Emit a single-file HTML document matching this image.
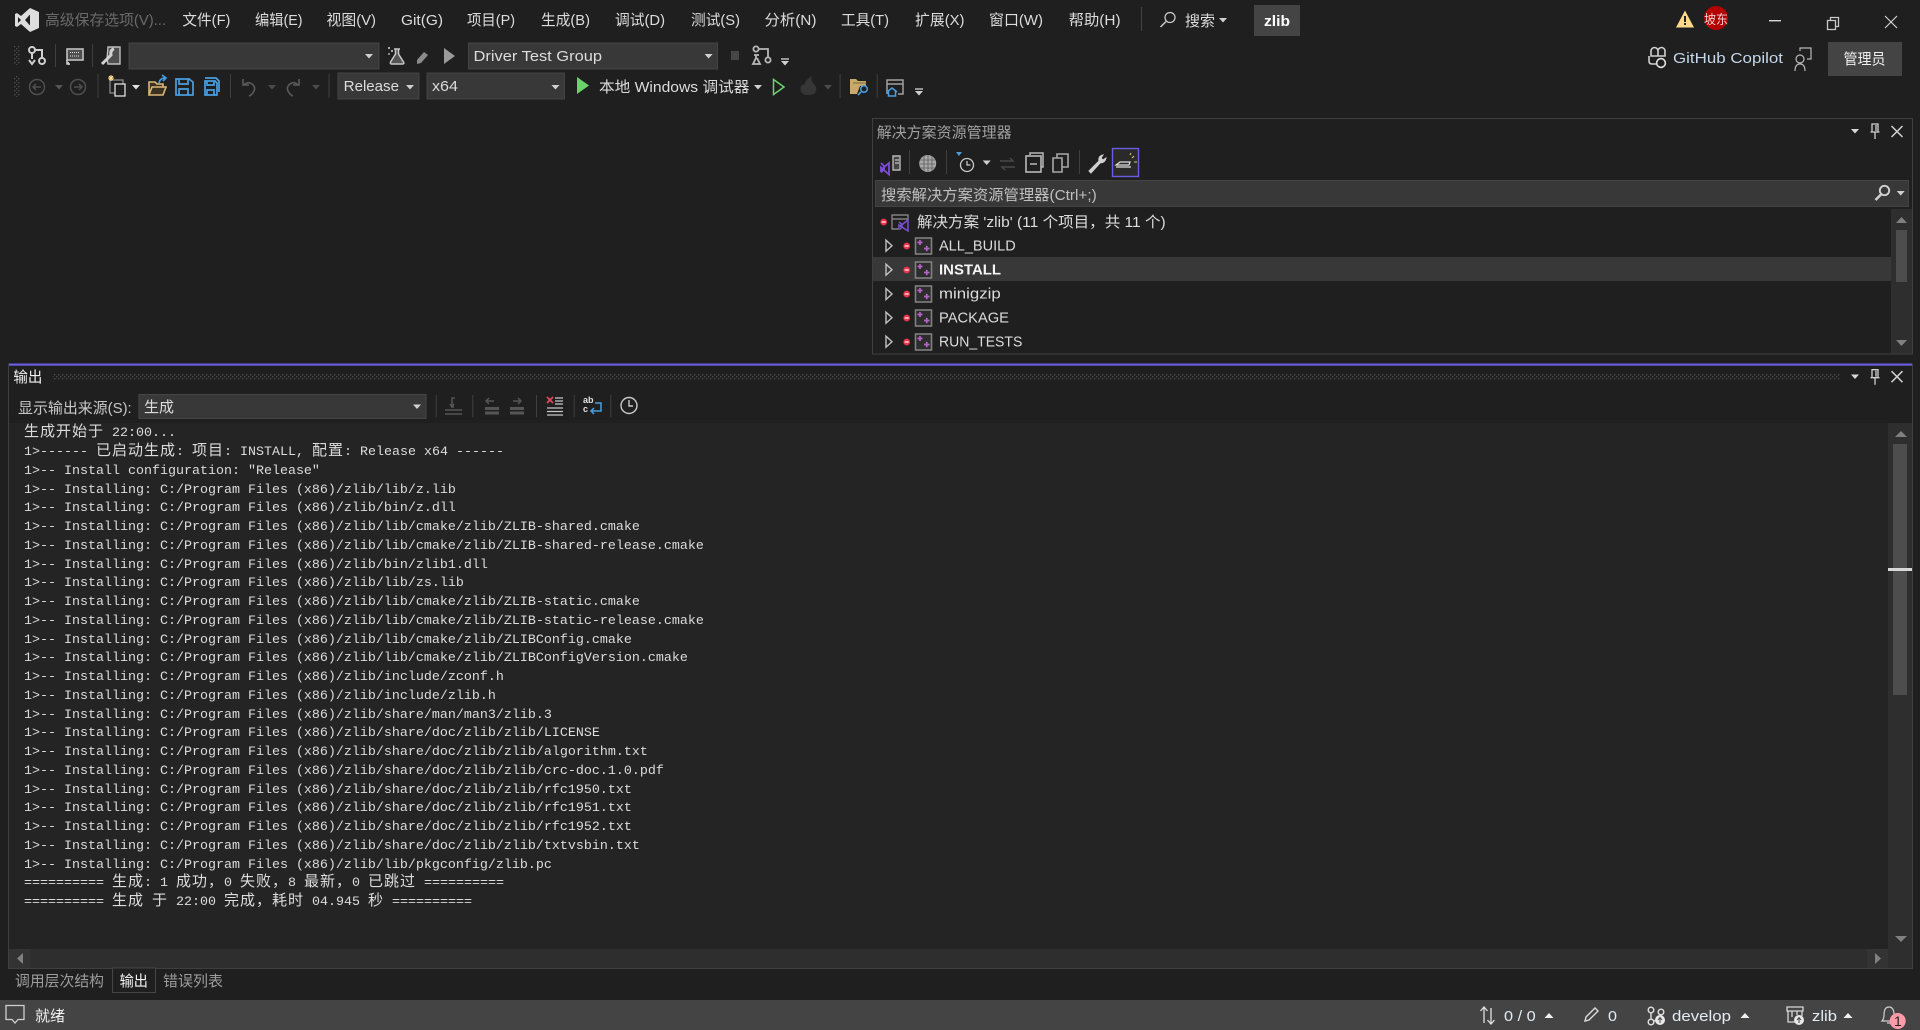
<!DOCTYPE html>
<html lang="zh"><head><meta charset="utf-8"><title>zlib</title>
<style>
html,body{margin:0;padding:0;width:1920px;height:1030px;overflow:hidden;background:#1f1f1f}
svg{position:absolute;left:0;top:0}
svg text{font-family:"Liberation Sans","Noto Sans CJK SC",sans-serif;font-size:15px;fill:#dcdcdc}
use{fill:#d0d0d0}
#o{position:absolute;left:24px;top:422.4px;width:1850px;color:#dcdcdc;font-family:"Liberation Mono",monospace;font-size:13.33px}
#o div{height:18.75px;line-height:18.75px;white-space:pre}
#o div::before{content:"\200b";font-family:"Noto Sans CJK SC",sans-serif;font-size:15px}
#o b{font-weight:400;font-family:"Noto Sans CJK SC",sans-serif;font-size:15px;letter-spacing:1px}
</style></head><body>
<svg width="1920" height="1030" viewBox="0 0 1920 1030" xmlns="http://www.w3.org/2000/svg">
<defs>
<path id="cd" d="M-4,-2h8l-4,4.5z"/>
<path id="cu" d="M-4.5,2.5h9l-4.5,-5z"/>
<pattern id="gr" width="4" height="4" patternUnits="userSpaceOnUse"><rect width="1.4" height="1.4" fill="#4a4a4a"/><rect x="2" y="2" width="1.4" height="1.4" fill="#4a4a4a"/></pattern>
<g id="proj"><rect x="-7.5" y="-8" width="16" height="16" fill="#2c2c2c" stroke="#808080" stroke-width="1.6"/><path d="M-5.5,-3.5h5M-3,-6v5M1,2.5h5.500M3.750,-.2v5.400" stroke="#b95fd0" stroke-width="1.7" fill="none"/></g>
<g id="tri"><path d="M-3,-5.5L3,0L-3,5.5Z" fill="none" stroke="#c0c0c0" stroke-width="1.4"/></g>
<g id="dot"><circle r="3.4" fill="#e8344c"/><rect x="-2" y="-.6" width="4" height="1.2" fill="#fff"/></g>
<g id="pin"><path d="M-3,-7h6v8h-6zM-4.5,1h9M0,1v7M1,-6v6" stroke="#d0d0d0" stroke-width="1.3" fill="none"/></g>
<path id="x" d="M-5.5,-5.5L5.5,5.5M5.5,-5.5L-5.5,5.5" stroke="#d0d0d0" stroke-width="1.5" fill="none"/>
</defs>

<!-- combos top toolbar -->
<rect x="129" y="43" width="250" height="26" fill="#383838" stroke="#434343"/>
<rect x="468.5" y="43" width="249" height="26" fill="#383838" stroke="#434343"/>
<rect x="338" y="73" width="81" height="26" fill="#383838" stroke="#434343"/>
<rect x="427" y="73" width="137.5" height="26" fill="#383838" stroke="#434343"/>

<!-- logo -->
<path fill-rule="evenodd" fill="#dedede" d="M30,8L39,12V28L30,32L21,24L17,27L15,26V14L17,13L21,16ZM18,17L21,20L18,23ZM30,14.5L25,20L30,25.5Z"/>

<!-- menu -->
<text x="45" y="25" textLength="121" lengthAdjust="spacingAndGlyphs" style="fill:#6a6a6a">高级保存选项(V)...</text>
<text x="182.4" y="25" textLength="48" lengthAdjust="spacingAndGlyphs">文件(F)</text>
<text x="255" y="25" textLength="47.5" lengthAdjust="spacingAndGlyphs">编辑(E)</text>
<text x="326.5" y="25" textLength="49.5" lengthAdjust="spacingAndGlyphs">视图(V)</text>
<text x="401" y="25" textLength="42" lengthAdjust="spacingAndGlyphs">Git(G)</text>
<text x="467" y="25" textLength="48" lengthAdjust="spacingAndGlyphs">项目(P)</text>
<text x="541" y="25" textLength="49" lengthAdjust="spacingAndGlyphs">生成(B)</text>
<text x="615" y="25" textLength="50" lengthAdjust="spacingAndGlyphs">调试(D)</text>
<text x="691" y="25" textLength="49" lengthAdjust="spacingAndGlyphs">测试(S)</text>
<text x="764.5" y="25" textLength="52" lengthAdjust="spacingAndGlyphs">分析(N)</text>
<text x="841" y="25" textLength="48" lengthAdjust="spacingAndGlyphs">工具(T)</text>
<text x="915" y="25" textLength="49.5" lengthAdjust="spacingAndGlyphs">扩展(X)</text>
<text x="989" y="25" textLength="54" lengthAdjust="spacingAndGlyphs">窗口(W)</text>
<text x="1068.6" y="25" textLength="52" lengthAdjust="spacingAndGlyphs">帮助(H)</text>
<rect x="1141" y="7" width="1" height="24" fill="#444"/>
<circle cx="1170" cy="17.5" r="5" fill="none" stroke="#c8c8c8" stroke-width="1.3"/><path d="M1166,21.5L1160.5,27" stroke="#c8c8c8" stroke-width="1.5"/>
<text x="1185" y="26" textLength="30" lengthAdjust="spacingAndGlyphs">搜索</text>
<use href="#cd" x="1223" y="20"/>
<rect x="1254" y="5" width="46" height="31" fill="#444"/>
<text x="1264" y="26" textLength="26" lengthAdjust="spacingAndGlyphs" style="font-weight:700;fill:#fff">zlib</text>

<!-- window right -->
<path d="M1685,10.500L1694,27.500H1676Z" fill="#ffd98a"/><rect x="1684" y="16" width="2" height="6" fill="#222"/><rect x="1684" y="23" width="2" height="2" fill="#222"/>
<circle cx="1716" cy="18" r="12" fill="#b30000"/>
<text x="1704" y="24" textLength="24" lengthAdjust="spacingAndGlyphs" style="font-size:13px;fill:#f0d0d0">坡东</text>
<rect x="1769" y="20" width="12" height="1.4" fill="#d8d8d8"/>
<path d="M1827.5,20.5h8v9h-8zM1830.5,20.5v-3h8v9h-3" fill="none" stroke="#c8c8c8" stroke-width="1.3"/>
<path d="M1885,16L1897,28M1897,16L1885,28" stroke="#d0d0d0" stroke-width="1.2"/>
<g fill="none" stroke="#d0d0d0" stroke-width="1.6"><path d="M1651,51a3.5,3.5 0 0 1 7,0v5h-7zM1658,51a3.5,3.5 0 0 1 7,0v5h-7zM1649,56v5q0,3 3,3h4"/></g><circle cx="1661" cy="63" r="4.4" fill="#1f1f1f" stroke="#e0e0e0" stroke-width="1.6"/>
<text x="1673" y="63" textLength="110" lengthAdjust="spacingAndGlyphs" style="fill:#c4d6ea">GitHub Copilot</text>
<g fill="none" stroke="#b8b8b8" stroke-width="1.2"><circle cx="1800" cy="59" r="4"/><path d="M1795,71q0,-7 5,-7t5,7M1800,51v-3h11v11h-4"/></g>
<rect x="1828" y="42" width="74" height="34" fill="#444"/>
<text x="1843.5" y="64" textLength="42" lengthAdjust="spacingAndGlyphs" style="fill:#f0f0f0">管理员</text>

<!-- toolbar 1 -->
<rect x="14" y="46" width="6" height="19" fill="url(#gr)"/>
<rect x="14" y="76" width="6" height="21" fill="url(#gr)"/>
<g fill="none" stroke="#cfcfcf" stroke-width="2"><circle cx="32" cy="50" r="3"/><circle cx="42" cy="61" r="3"/><path d="M35,50h7v8M32,53v6M29,60l3,4l3,-4"/></g>
<rect x="55" y="44" width="1" height="23" fill="#3f3f3f"/>
<rect x="92" y="44" width="1" height="23" fill="#3f3f3f"/>
<rect x="67" y="49" width="16" height="11" fill="#4e4e4e" stroke="#c0c0c0" stroke-width="1.6"/><path d="M70,52.5h10M70,56h10" stroke="#e0e0e0" stroke-dasharray="1 1"/><path d="M67,60v4h3M68,62l1,3" stroke="#c8c8c8" stroke-width="1.6" fill="none"/>
<path d="M108,47h12v17h-12l-1,-5z" fill="#4e4e4e" stroke="#bfbfbf" stroke-width="1.4"/><path d="M102,64l9,-9q-1,-5 3,-6" stroke="#d0d0d0" stroke-width="3" fill="none"/>
<use href="#cd" x="369" y="56"/>
<path d="M394,49h6M395.500,49v5l-5,8q-.5,2 1,2h11q2,0 1,-2l-5,-8v-5" fill="#555" stroke="#c8c8c8" stroke-width="1.5"/><rect x="388" y="47" width="2" height="2" fill="#aaa"/><rect x="391" y="50" width="2" height="2" fill="#aaa"/><rect x="388" y="53" width="2" height="2" fill="#888"/>
<path d="M417,60l7,-8l4,3l-7,8l-4,1z" fill="#8a8a8a"/>
<path d="M444,48L455,56L444,64Z" fill="#9a9a9a"/>
<text x="473.5" y="61" textLength="128.5" lengthAdjust="spacingAndGlyphs">Driver Test Group</text>
<use href="#cd" x="708.6" y="56"/>
<rect x="731" y="51" width="8" height="9" fill="#474747"/>
<g fill="none" stroke="#b8b8b8" stroke-width="1.8"><circle cx="756" cy="49" r="2.6"/><circle cx="768" cy="60" r="2.6"/><path d="M759,49h9v8"/><path d="M754,55h5M756,55v3l-3,6h7l-3,-6" /></g>
<path d="M781,59h8" stroke="#c8c8c8" stroke-width="1.4"/><use href="#cd" x="785" y="63"/>

<!-- toolbar 2 -->
<g fill="none" stroke="#4e4e4e" stroke-width="1.5"><circle cx="37" cy="87" r="7.5"/><path d="M41,87h-8M36,84l-3,3l3,3"/><circle cx="78" cy="87" r="7.5"/><path d="M74,87h8M79,84l3,3l-3,3"/></g>
<use href="#cd" x="59" y="87" style="fill:#555"/>
<rect x="97.5" y="74" width="1" height="24" fill="#3f3f3f"/>
<g transform="translate(-2,0)"><rect x="112" y="80" width="13" height="13" fill="none" stroke="#8a8a8a" stroke-width="1.3"/><rect x="117" y="84" width="10" height="12" fill="#1f1f1f" stroke="#e0e0e0" stroke-width="1.3"/><path d="M110,78h6M113,75v6M111,76l4,4M115,76l-4,4" stroke="#ffdf8c" stroke-width="1.1"/></g>
<use href="#cd" x="136" y="87" style="fill:#e0e0e0"/>
<path d="M150,95V82h6l2,2h6v3M150,95l3,-8h14l-3,8z" fill="#3a3220" stroke="#dcb67a" stroke-width="1.6" transform="translate(-1,0)"/><path d="M160,83q1,-5 6,-5M163,75l4,3l-3,3" fill="none" stroke="#4a9fe0" stroke-width="1.6" transform="translate(-1,0)"/>
<g fill="none" stroke="#4a9fe0" stroke-width="1.7" transform="translate(-1,0)"><path d="M177,79h13l4,3v13h-17zM180,79v5h9v-5M180,95v-6h9v6"/><path d="M206,81h10l2,2v12h-12zM208,81v4h7v-4M208,95v-5h7v5M206,78h11l3,3v11"/></g>
<rect x="230" y="74" width="1" height="24" fill="#3f3f3f"/>
<path d="M243,79v6h6M244,85q4,-4 8,-1q4,3 2,7q-2,4 -5,5" fill="none" stroke="#5a5a5a" stroke-width="1.6"/>
<use href="#cd" x="272" y="87" style="fill:#4c4c4c"/>
<path d="M299,79v6h-6M298,85q-4,-4 -8,-1q-4,3 -2,7q2,4 5,5" fill="none" stroke="#5a5a5a" stroke-width="1.6"/>
<use href="#cd" x="316" y="87" style="fill:#4c4c4c"/>
<rect x="328.5" y="74" width="1" height="24" fill="#3f3f3f"/>
<text x="343.7" y="91" textLength="55.3" lengthAdjust="spacingAndGlyphs">Release</text>
<use href="#cd" x="410" y="87"/>
<text x="432" y="91" textLength="26" lengthAdjust="spacingAndGlyphs">x64</text>
<use href="#cd" x="555.5" y="87"/>
<path d="M577,77L589,85.5L577,94Z" fill="#6cd36c"/>
<text x="599" y="92" textLength="150.4" lengthAdjust="spacingAndGlyphs">本地 Windows 调试器</text>
<use href="#cd" x="758" y="87"/>
<path d="M773.5,79.5L784,87L773.5,94.5Z" fill="none" stroke="#6cd36c" stroke-width="1.5"/>
<path d="M804,95q-6,-3 -4,-9q2,-2 3,-1q1,-5 8,-9q-2,5 2,8q4,4 1,9q-2,2 -10,2z" fill="#363636" transform="translate(1,0)"/>
<use href="#cd" x="828" y="87" style="fill:#4c4c4c"/>
<rect x="839.6" y="74" width="1" height="24" fill="#3f3f3f"/>
<path d="M850,94V79h6l2,2h8v5h-6l-3,8z" fill="#c9a86a"/><path d="M853,83h13" stroke="#7d6a44"/>
<circle cx="864" cy="89" r="3.3" fill="#1f1f1f" stroke="#4a9fe0" stroke-width="1.5"/><path d="M861,92l-3,3" stroke="#4a9fe0" stroke-width="1.6"/>
<rect x="876.7" y="74" width="1" height="24" fill="#3f3f3f"/>
<path d="M887,94V80h16v14h-5M887,84h16" fill="none" stroke="#a0a0a0" stroke-width="1.5"/>
<path d="M887,92l5,-4l5,4M888.5,91v5h7v-5" fill="none" stroke="#4a9fe0" stroke-width="1.5"/>
<path d="M915,89h8" stroke="#c8c8c8" stroke-width="1.4"/><use href="#cd" x="919" y="93"/>

<!-- solution explorer -->
<rect x="872.5" y="118.5" width="1040" height="235.5" fill="#1f1f1f" stroke="#3f3f3f"/>
<text x="876.7" y="137.500" textLength="135" lengthAdjust="spacingAndGlyphs" style="fill:#a0a0a0">解决方案资源管理器</text>
<use href="#cd" x="1855" y="131" style="fill:#d8d8d8"/><use href="#pin" x="1875" y="131"/><use href="#x" x="1897" y="131.5"/>
<path d="M893,156h7v14h-7z" fill="#444" stroke="#b8b8b8" stroke-width="1.4"/><path d="M895,160h4M895,163h4" stroke="#e0e0e0"/>
<path d="M881,163l3,3v3l-3,3.500M881,170l8,-7v11.500l-8,-7z" fill="#1f1f1f" stroke="#7a4fd6" stroke-width="1.800"/>
<rect x="909" y="150" width="1" height="24" fill="#3f3f3f"/>
<circle cx="927.7" cy="163.5" r="8.500" fill="#a8a8a8"/><path d="M924,156v15M928,155v17M932,156v15M920,160h15M920,164h15M920,168h15" stroke="#5e5e5e" stroke-width=".8"/>
<rect x="946" y="150" width="1" height="24" fill="#3f3f3f"/>
<path d="M956,152h6l-3,4z" fill="#4a9fe0"/>
<circle cx="967" cy="165" r="6.5" fill="none" stroke="#c8c8c8" stroke-width="1.3"/><path d="M967,161v4h3.5" stroke="#c8c8c8" fill="none" stroke-width="1.3"/>
<use href="#cd" x="986.7" y="162.500"/>
<path d="M1000,161h13l-3,-3M1015,167h-13l3,3" fill="none" stroke="#484848" stroke-width="1.5"/>
<rect x="1026" y="156" width="15" height="16" fill="none" stroke="#b8b8b8" stroke-width="1.6"/><path d="M1030,155v-2h13v14h-2M1030,164h7" fill="none" stroke="#b8b8b8" stroke-width="1.5"/>
<path d="M1053,158h9v14h-9zM1057,158v-4h11v13h-6" fill="none" stroke="#a8a8a8" stroke-width="1.6"/>
<rect x="1079" y="150" width="1" height="24" fill="#3f3f3f"/>
<path d="M1089,171l10,-10q-1,-5 4,-6l-2,3l2,2l3,-2q-1,5 -6,5l-9,10z" fill="#d0d0d0" stroke="#d0d0d0" stroke-width="1"/>
<rect x="1112.5" y="148.5" width="26" height="28" fill="#2a2a2a" stroke="#6a5de0" stroke-width="1.4"/>
<path d="M1116,165h13l1,-3h-10zM1116,167h15" fill="none" stroke="#e0e0e0" stroke-width="1.2"/><path d="M1132,158l2,-2M1134,162h3M1130,155l1,-2" stroke="#e8c560" stroke-width="1"/>
<rect x="875.5" y="180.5" width="1033" height="26" fill="#383838" stroke="#434343"/>
<text x="881" y="200" textLength="215.700" lengthAdjust="spacingAndGlyphs" style="fill:#c0c0c0">搜索解决方案资源管理器(Ctrl+;)</text>
<circle cx="1884.500" cy="190.500" r="4.700" fill="none" stroke="#d0d0d0" stroke-width="1.900"/><path d="M1881,194.500l-5.500,5.500" stroke="#d0d0d0" stroke-width="2.600"/>
<use href="#cd" x="1900.7" y="193"/>
<rect x="873" y="257" width="1018" height="24" fill="#383838"/>
<rect x="1891" y="209" width="21" height="144.5" fill="#2e2e2e"/>
<rect x="1896" y="230" width="11" height="52" fill="#4d4d4d"/>
<path d="M1896,223h11l-5.500,-6z" fill="#808080"/><path d="M1896,340h11l-5.500,6z" fill="#808080"/>
<use href="#dot" x="883.7" y="222"/>
<path d="M892,219v-4h16v5M892,219h16M892,219v10h7" fill="none" stroke="#808080" stroke-width="1.4"/>
<path d="M899,222l3,2.500v3l-3,2M899,227l9,-7v11l-9,-6z" fill="#1f1f1f" stroke="#7a4fd6" stroke-width="1.500"/>
<text x="917" y="227" textLength="248.700" lengthAdjust="spacingAndGlyphs">解决方案 'zlib' (11 个项目，共 11 个)</text>
<use href="#tri" x="889" y="245.700"/><use href="#dot" x="906.700" y="246"/><use href="#proj" x="923" y="246"/>
<text x="939" y="250.500" textLength="76.700" lengthAdjust="spacingAndGlyphs">ALL_BUILD</text>
<use href="#tri" x="889" y="269.700"/><use href="#dot" x="906.700" y="270"/><use href="#proj" x="923" y="270"/>
<text x="939" y="274.500" textLength="62" lengthAdjust="spacingAndGlyphs" style="font-weight:700;fill:#f4f4f4">INSTALL</text>
<use href="#tri" x="889" y="294"/><use href="#dot" x="906.700" y="294"/><use href="#proj" x="923" y="294"/>
<text x="939" y="298.500" textLength="61.700" lengthAdjust="spacingAndGlyphs">minigzip</text>
<use href="#tri" x="889" y="317.700"/><use href="#dot" x="906.700" y="318"/><use href="#proj" x="923" y="318"/>
<text x="939" y="322.500" textLength="70" lengthAdjust="spacingAndGlyphs">PACKAGE</text>
<use href="#tri" x="889" y="341.700"/><use href="#dot" x="906.700" y="342"/><use href="#proj" x="923" y="342"/>
<text x="939" y="346.500" textLength="83.300" lengthAdjust="spacingAndGlyphs">RUN_TESTS</text>

<!-- output panel -->
<rect x="8.500" y="364" width="1904" height="604.500" fill="#1f1f1f" stroke="#3f3f3f"/>
<rect x="9" y="363.500" width="1904" height="2.200" fill="#6a5de0"/>
<text x="13.400" y="382" textLength="29" lengthAdjust="spacingAndGlyphs" style="fill:#f0f0f0">输出</text>
<rect x="52.700" y="374" width="1787" height="6" fill="url(#gr)"/>
<use href="#cd" x="1855" y="376.500" style="fill:#d8d8d8"/><use href="#pin" x="1875" y="376.700"/><use href="#x" x="1897" y="376.700"/>
<text x="18" y="413" textLength="113.700" lengthAdjust="spacingAndGlyphs" style="fill:#c8c8c8">显示输出来源(S):</text>
<rect x="139" y="394.500" width="287" height="24" fill="#383838" stroke="#454545"/>
<text x="144" y="412" textLength="30" lengthAdjust="spacingAndGlyphs">生成</text>
<use href="#cd" x="417" y="406.500"/>
<g fill="#3f3f3f"><rect x="435.700" y="395" width="1" height="22"/><rect x="472.300" y="395" width="1" height="22"/><rect x="536" y="395" width="1" height="22"/><rect x="573.700" y="395" width="1" height="22"/><rect x="610.300" y="395" width="1" height="22"/></g>
<g stroke="#555" fill="none" stroke-width="1.500"><path d="M445,410h17M445,414h17M454,407h-2v-9h3M450,404l2,3l2,-3"/><path d="M494,401h-8M489,398l-3,3l3,3M513,401h8M518,398l3,3l-3,3"/></g>
<g fill="#555"><rect x="485" y="407" width="14" height="3"/><rect x="485" y="411.500" width="14" height="3"/><rect x="510" y="407" width="14" height="3"/><rect x="510" y="411.500" width="14" height="3"/></g>
<path d="M547,397l6,6M553,397l-6,6" stroke="#e8485c" stroke-width="1.700"/>
<path d="M555,398h8M555,401h8M555,404h8M547,408h16M547,411.500h16M547,415h16" stroke="#c8c8c8" stroke-width="1.300"/>
<text x="583" y="403" style="font-size:9px;font-weight:700;fill:#e0e0e0">ab</text><text x="583" y="412" style="font-size:9px;font-weight:700;fill:#e0e0e0">c</text>
<path d="M595,403h6v8h-9M594,408l-3,3l3,3" fill="none" stroke="#4a9fe0" stroke-width="1.500"/>
<circle cx="629" cy="405.500" r="8" fill="none" stroke="#c8c8c8" stroke-width="1.400"/><path d="M629,400v6h4" fill="none" stroke="#c8c8c8" stroke-width="1.400"/>

<rect x="9" y="423" width="1879" height="526" fill="#242424"/>
<rect x="9" y="949" width="1879" height="19" fill="#2e2e2e"/>
<rect x="9" y="949" width="21" height="19" fill="#333"/>
<rect x="1867" y="949" width="21" height="19" fill="#333"/>
<path d="M17,958.500l6,-5.500v11z" fill="#808080"/><path d="M1881,958.500l-6,-5.500v11z" fill="#808080"/>
<rect x="1888" y="423" width="24" height="545" fill="#2e2e2e"/>
<rect x="1893" y="444" width="14" height="251" fill="#4d4d4d"/>
<rect x="1888" y="568" width="24" height="3" fill="#d8d8d8"/>
<path d="M1895,437h12l-6,-6z" fill="#808080"/><path d="M1895,936h12l-6,6z" fill="#808080"/>
<rect x="1912" y="363.500" width="1" height="605" fill="#3f3f3f"/>

<!-- tabs -->
<text x="15" y="986" textLength="89" lengthAdjust="spacingAndGlyphs" style="fill:#9c9c9c">调用层次结构</text>
<rect x="112.500" y="968" width="43" height="24.500" fill="#1f1f1f" stroke="#454545"/>
<text x="119.600" y="986" textLength="28.400" lengthAdjust="spacingAndGlyphs" style="fill:#f4f4f4">输出</text>
<text x="163" y="986" textLength="60" lengthAdjust="spacingAndGlyphs" style="fill:#9c9c9c">错误列表</text>

<!-- status bar -->
<rect x="0" y="1000" width="1920" height="30" fill="#444"/>
<path d="M6,1005.500h18v14h-6l-3,3.500l-3,-3.500h-6z" fill="none" stroke="#d0d0d0" stroke-width="1.300"/>
<text x="35" y="1021" textLength="30" lengthAdjust="spacingAndGlyphs" style="fill:#f0f0f0">就绪</text>
<path d="M1484,1023v-15M1480.500,1011l3.500,-4l3.500,4M1491,1008v15M1487.500,1020l3.500,4l3.500,-4" fill="none" stroke="#e0e0e0" stroke-width="1.300"/>
<text x="1504" y="1021" textLength="31.700" lengthAdjust="spacingAndGlyphs" style="fill:#e4ecf4">0 / 0</text>
<use href="#cu" x="1549" y="1015.500" style="fill:#f0f0f0"/>
<path d="M1585,1021l1,-4l9,-9l3,3l-9,9z" fill="none" stroke="#dcdcdc" stroke-width="1.400"/>
<text x="1608" y="1021" textLength="9" lengthAdjust="spacingAndGlyphs" style="fill:#e4ecf4">0</text>
<g fill="none" stroke="#e0e0e0" stroke-width="1.400"><circle cx="1651" cy="1010" r="2.800"/><circle cx="1651" cy="1022" r="2.800"/><circle cx="1661" cy="1012" r="2.800"/><path d="M1651,1013v6M1654,1021q4,-1 5,-4"/></g>
<circle cx="1660" cy="1020" r="5" fill="#e8e8e8"/><path d="M1660,1023v-5M1658,1020l2,-2.500l2,2.500" stroke="#444" fill="none"/>
<text x="1672" y="1021" textLength="59" lengthAdjust="spacingAndGlyphs" style="fill:#e4ecf4">develop</text>
<use href="#cu" x="1745" y="1015.500" style="fill:#f0f0f0"/>
<path d="M1787,1007h16v4h-16zM1788,1011v11h8M1802,1011v5M1792,1011v6M1797,1011v4" fill="none" stroke="#d8d8d8" stroke-width="1.300"/>
<circle cx="1799" cy="1020" r="5" fill="#e8e8e8"/><path d="M1799,1023v-5M1797,1020l2,-2.500l2,2.500" stroke="#444" fill="none"/>
<text x="1812" y="1021" textLength="25" lengthAdjust="spacingAndGlyphs" style="fill:#e4ecf4">zlib</text>
<use href="#cu" x="1848" y="1015.500" style="fill:#f0f0f0"/>
<path d="M1882,1021q2,-2 2,-6q0,-8 5,-8t5,8q0,4 2,6zM1887,1023h4" fill="none" stroke="#d0d0d0" stroke-width="1.200"/>
<circle cx="1897.700" cy="1021" r="8" fill="#ff9aa8"/>
<text x="1894" y="1026" style="font-size:14px;fill:#222">1</text>
</svg>
<div id="o">
<div><b>生成开始于</b> 22:00...</div>
<div>1&gt;------ <b>已启动生成</b>: <b>项目</b>: INSTALL, <b>配置</b>: Release x64 ------</div>
<div>1&gt;-- Install configuration: "Release"</div>
<div>1&gt;-- Installing: C:/Program Files (x86)/zlib/lib/z.lib</div>
<div>1&gt;-- Installing: C:/Program Files (x86)/zlib/bin/z.dll</div>
<div>1&gt;-- Installing: C:/Program Files (x86)/zlib/lib/cmake/zlib/ZLIB-shared.cmake</div>
<div>1&gt;-- Installing: C:/Program Files (x86)/zlib/lib/cmake/zlib/ZLIB-shared-release.cmake</div>
<div>1&gt;-- Installing: C:/Program Files (x86)/zlib/bin/zlib1.dll</div>
<div>1&gt;-- Installing: C:/Program Files (x86)/zlib/lib/zs.lib</div>
<div>1&gt;-- Installing: C:/Program Files (x86)/zlib/lib/cmake/zlib/ZLIB-static.cmake</div>
<div>1&gt;-- Installing: C:/Program Files (x86)/zlib/lib/cmake/zlib/ZLIB-static-release.cmake</div>
<div>1&gt;-- Installing: C:/Program Files (x86)/zlib/lib/cmake/zlib/ZLIBConfig.cmake</div>
<div>1&gt;-- Installing: C:/Program Files (x86)/zlib/lib/cmake/zlib/ZLIBConfigVersion.cmake</div>
<div>1&gt;-- Installing: C:/Program Files (x86)/zlib/include/zconf.h</div>
<div>1&gt;-- Installing: C:/Program Files (x86)/zlib/include/zlib.h</div>
<div>1&gt;-- Installing: C:/Program Files (x86)/zlib/share/man/man3/zlib.3</div>
<div>1&gt;-- Installing: C:/Program Files (x86)/zlib/share/doc/zlib/zlib/LICENSE</div>
<div>1&gt;-- Installing: C:/Program Files (x86)/zlib/share/doc/zlib/zlib/algorithm.txt</div>
<div>1&gt;-- Installing: C:/Program Files (x86)/zlib/share/doc/zlib/zlib/crc-doc.1.0.pdf</div>
<div>1&gt;-- Installing: C:/Program Files (x86)/zlib/share/doc/zlib/zlib/rfc1950.txt</div>
<div>1&gt;-- Installing: C:/Program Files (x86)/zlib/share/doc/zlib/zlib/rfc1951.txt</div>
<div>1&gt;-- Installing: C:/Program Files (x86)/zlib/share/doc/zlib/zlib/rfc1952.txt</div>
<div>1&gt;-- Installing: C:/Program Files (x86)/zlib/share/doc/zlib/zlib/txtvsbin.txt</div>
<div>1&gt;-- Installing: C:/Program Files (x86)/zlib/lib/pkgconfig/zlib.pc</div>
<div>========== <b>生成</b>: 1 <b>成功，</b>0 <b>失败，</b>8 <b>最新，</b>0 <b>已跳过</b> ==========</div>
<div>========== <b>生成</b> <b>于</b> 22:00 <b>完成，耗时</b> 04.945 <b>秒</b> ==========</div>
</div>
</body></html>
